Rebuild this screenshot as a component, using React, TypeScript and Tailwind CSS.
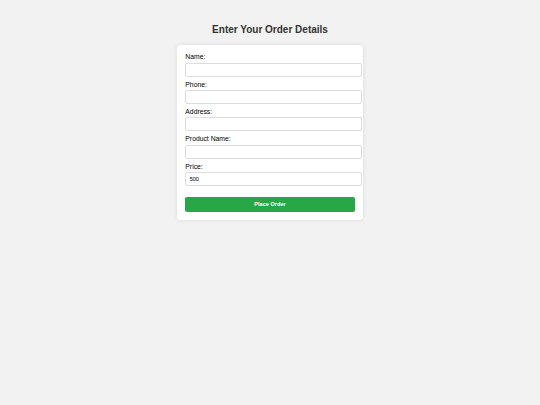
import React from "react";

const fields = [
  { label: "Name:", value: "" },
  { label: "Phone:", value: "" },
  { label: "Address:", value: "" },
  { label: "Product Name:", value: "" },
  { label: "Price:", value: "500" },
];

export default function App() {
  return (
    <div
      className="min-h-[405px] w-full bg-[#f2f2f2] pt-[24px]"
      style={{ fontFamily: '"Liberation Sans", Arial, sans-serif' }}
    >
      <h2 className="text-center text-[10px] font-bold leading-[11.5px] text-[#333] mb-[9.5px]">
        Enter Your Order Details
      </h2>
      <div className="mx-auto w-[186px] rounded-[4px] bg-white p-[8.33px] shadow-[0_0_4px_rgba(0,0,0,0.1)]">
        {fields.map((f) => (
          <div key={f.label}>
            <label className="block text-[6.8px] leading-[7.67px] text-black mb-[1.5px]">
              {f.label}
            </label>
            <input
              readOnly
              value={f.value}
              className="block h-[14px] w-[176.6px] rounded-[2px] border border-[#dddddd] bg-white px-[3.3px] text-[5.6px] text-black mb-[4.2px] outline-none"
              style={{ fontFamily: '"Liberation Sans", Arial, sans-serif' }}
            />
          </div>
        ))}
        <button className="mt-[11px] block h-[14.6px] w-full rounded-[2px] bg-[#28a745] text-[5.6px] font-bold text-white">
          Place Order
        </button>
      </div>
    </div>
  );
}
